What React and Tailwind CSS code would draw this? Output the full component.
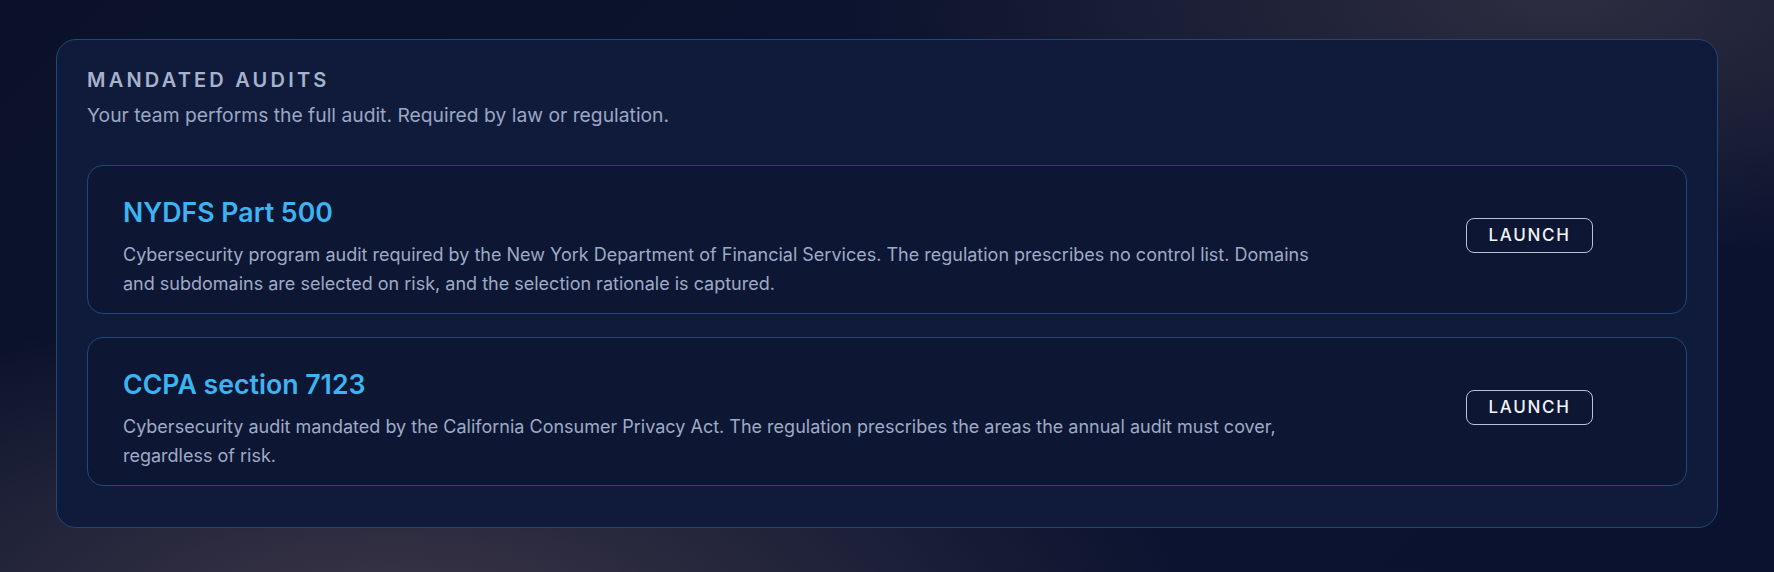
import React from "react";

const audits = [
  {
    title: "NYDFS Part 500",
    desc: "Cybersecurity program audit required by the New York Department of Financial Services. The regulation prescribes no control list. Domains and subdomains are selected on risk, and the selection rationale is captured.",
  },
  {
    title: "CCPA section 7123",
    desc: "Cybersecurity audit mandated by the California Consumer Privacy Act. The regulation prescribes the areas the annual audit must cover, regardless of risk.",
  },
];

export default function App() {
  return (
    <div
      className="w-full h-[572px] overflow-hidden px-14 pt-[39px] bg-[radial-gradient(ellipse_45%_55%_at_22%_108%,#3d3548_0%,#2a2a3e_35%,transparent_100%),radial-gradient(ellipse_40%_45%_at_88%_0%,#2c2d40_0%,#202238_40%,transparent_100%),linear-gradient(135deg,#0a1129_0%,#0c1430_50%,#0b1230_100%)]"
      style={{ fontFamily: "Inter, 'Noto Sans', 'Liberation Sans', sans-serif" }}
    >
      <section className="rounded-[20px] border border-[#1f4876] bg-[#101b3b] px-[30px] pt-[26px] pb-[41px]">
        <h2 className="text-[20px] leading-[28px] font-semibold tracking-[0.16em] text-[#a7b2cd]">
          MANDATED AUDITS
        </h2>
        <p className="mt-[7px] text-[19.3px] leading-[28px] text-[#9ba7c3]">
          Your team performs the full audit. Required by law or regulation.
        </p>
        <div className="mt-9 flex flex-col gap-[23px]">
          {audits.map((a) => (
            <div
              key={a.title}
              className="flex items-start rounded-2xl border border-[#1e4878] bg-[#0d1633] pl-[35px] pr-[35px] pt-[30px] pb-[15px]"
            >
              <div className="flex-1">
                <h3 className="text-[26.7px] leading-[32px] font-semibold text-[#3db4f2]">
                  {a.title}
                </h3>
                <p className="mt-3 max-w-[1210px] text-[18px] leading-[29px] text-[#9fabc6]">
                  {a.desc}
                </p>
              </div>
              <button className="mt-[22px] mr-[58px] shrink-0 w-[127px] h-[35px] rounded-lg border border-[#b9c3d8] text-[17px] font-medium tracking-[0.1em] text-[#f1f4f9]">
                LAUNCH
              </button>
            </div>
          ))}
        </div>
      </section>
    </div>
  );
}
